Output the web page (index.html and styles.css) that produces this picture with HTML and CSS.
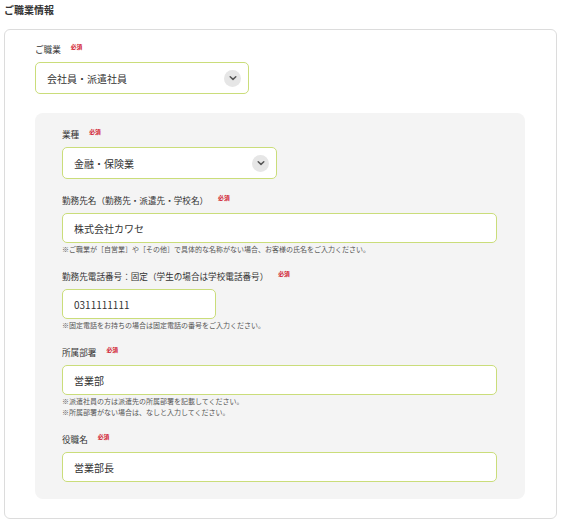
FILE: index.html
```html
<!DOCTYPE html>
<html lang="ja">
<head>
<meta charset="utf-8">
<title>ご職業情報</title>
<link rel="stylesheet" href="styles.css">
</head>
<body>
<h2 class="title">ご職業情報</h2>
<div class="card">
  <div class="field">
    <div class="label">ご職業<span class="req">必須</span></div>
    <div class="box select w-job"><span>会社員・派遣社員</span><span class="chev"><svg viewBox="0 0 10 10" width="10" height="10"><path d="M2.2 3.8 L5 6.4 L7.8 3.8" fill="none" stroke="#555" stroke-width="1.5" stroke-linecap="round" stroke-linejoin="round"/></svg></span></div>
  </div>
  <div class="sub">
    <div class="field">
      <div class="label">業種<span class="req">必須</span></div>
      <div class="box select w-ind"><span>金融・保険業</span><span class="chev"><svg viewBox="0 0 10 10" width="10" height="10"><path d="M2.2 3.8 L5 6.4 L7.8 3.8" fill="none" stroke="#555" stroke-width="1.5" stroke-linecap="round" stroke-linejoin="round"/></svg></span></div>
    </div>
    <div class="field">
      <div class="label">勤務先名（勤務先・派遣先・学校名）<span class="req">必須</span></div>
      <div class="box input w-full">株式会社カワセ</div>
      <p class="note">※ご職業が［自営業］や［その他］で具体的な名称がない場合、お客様の氏名をご入力ください。</p>
    </div>
    <div class="field">
      <div class="label">勤務先電話番号：固定（学生の場合は学校電話番号）<span class="req">必須</span></div>
      <div class="box input w-tel">0311111111</div>
      <p class="note">※固定電話をお持ちの場合は固定電話の番号をご入力ください。</p>
    </div>
    <div class="field">
      <div class="label">所属部署<span class="req">必須</span></div>
      <div class="box input w-full">営業部</div>
      <p class="note">※派遣社員の方は派遣先の所属部署を記載してください。<br>※所属部署がない場合は、なしと入力してください。</p>
    </div>
    <div class="field">
      <div class="label">役職名<span class="req">必須</span></div>
      <div class="box input w-full">営業部長</div>
    </div>
  </div>
</div>
</body>
</html>
```
FILE: styles.css
```css
html, body {
  margin: 0;
  padding: 0;
  background: #fff;
}
body {
  padding: 3px 0 0 4px;
  font-family: "Noto Sans CJK JP", "Noto Sans", sans-serif;
  color: #333;
  width: 553px;
}
.title {
  margin: 0;
  font-size: 10px;
  line-height: 14px;
  font-weight: bold;
  color: #333;
}
.card {
  margin-top: 12px;
  border: 1px solid #dcdcdc;
  border-radius: 6px;
  padding: 13px 31px 19px 30px;
}
.field + .field {
  margin-top: 15px;
}
.label {
  font-size: 8.6px;
  line-height: 12px;
  color: #333;
  margin-bottom: 7px;
  display: flex;
  align-items: center;
}
.req {
  color: #d0142c;
  font-size: 5.8px;
  font-weight: bold;
  margin-left: 10px;
  position: relative;
  top: -2px;
}
.box {
  box-sizing: border-box;
  border: 1.5px solid #cadd7a;
  border-radius: 5px;
  background: #fff;
  font-size: 10px;
  color: #333;
  display: flex;
  align-items: center;
  padding-left: 11px;
}
.select {
  height: 32px;
  justify-content: space-between;
  padding-right: 7px;
}
.input {
  height: 30px;
}
.w-job { width: 214px; }
.w-ind { width: 215px; }
.w-full { width: 435px; }
.w-tel { width: 154px; }
.chev {
  width: 17px;
  height: 17px;
  border-radius: 50%;
  background: #e6e6e6;
  display: flex;
  align-items: center;
  justify-content: center;
}
.chev svg { display: block; }
.sub {
  margin-top: 19px;
  background: #f4f4f4;
  border-radius: 8px;
  padding: 15px 27px 17px 27px;
}
.note {
  margin: 1px 0 0;
  font-size: 7px;
  line-height: 11px;
  color: #555;
}
```
